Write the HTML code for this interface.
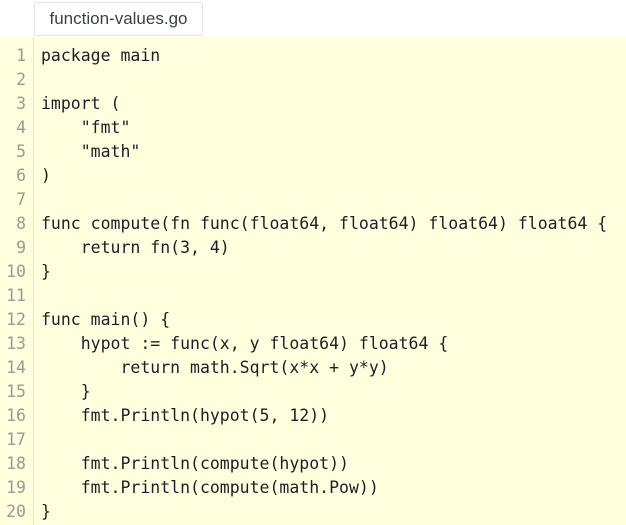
<!DOCTYPE html>
<html><head><style>
html,body{margin:0;padding:0;background:#fff;width:626px;height:525px;overflow:hidden}
.tab{position:absolute;left:34px;top:2px;width:167px;height:32px;border:1px solid #e3e3e3;border-radius:3px;background:#fff;font:17px "Liberation Sans",sans-serif;color:#3a3f48;line-height:32px;text-align:center}
.code{position:absolute;left:0;top:37px;width:626px;height:488px;background:#ffffdd}
.gut{position:absolute;left:0;top:7px;width:26px;text-align:right;color:#999;font:16.5px "DejaVu Sans Mono",monospace;line-height:24px;white-space:pre}
.bar{position:absolute;left:33px;top:0;width:1px;height:488px;background:#e6e6c8}
.src{position:absolute;left:41px;top:7px;color:#1b1e2b;font:16.5px "DejaVu Sans Mono",monospace;line-height:24px;white-space:pre;margin:0}
</style></head><body>
<div class="tab">function-values.go</div>
<div class="code"><div class="bar"></div>
<div class="gut">1
2
3
4
5
6
7
8
9
10
11
12
13
14
15
16
17
18
19
20</div>
<pre class="src">package main

import (
    "fmt"
    "math"
)

func compute(fn func(float64, float64) float64) float64 {
    return fn(3, 4)
}

func main() {
    hypot := func(x, y float64) float64 {
        return math.Sqrt(x*x + y*y)
    }
    fmt.Println(hypot(5, 12))

    fmt.Println(compute(hypot))
    fmt.Println(compute(math.Pow))
}</pre></div>
</body></html>
